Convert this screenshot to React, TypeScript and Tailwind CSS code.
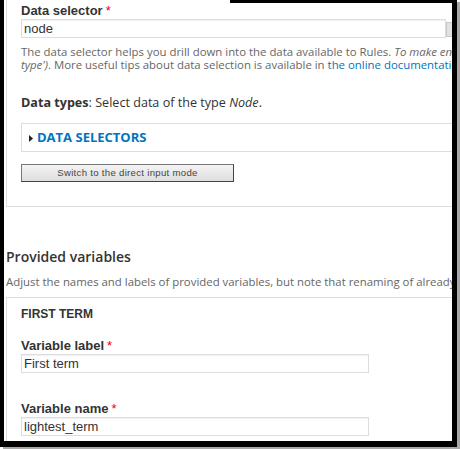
const sans = "font-['Open_Sans',sans-serif]";
const label = "font-['Liberation_Sans',Arial,sans-serif] font-bold text-[13px] text-[#333]";
const field =
  "h-[19px] border border-[#ddd] shadow-[inset_0_1px_1px_rgba(0,0,0,0.06)] bg-white px-[2px] font-['Liberation_Sans',Arial,sans-serif] text-[13px] leading-[17px] text-[#333]";

function Required() {
  return <span className="text-[#e00] ml-[3px] font-normal">*</span>;
}

export default function App() {
  return (
    <div className="relative w-[460px] h-[449px] bg-white overflow-hidden">
      <div className="w-[457px] h-[447px] border-l-[4px] border-r-[5px] border-b-[6px] border-black shadow-[3px_2px_0_#a8a8a8] overflow-hidden">
        <div className="w-[700px]">
          {/* rule settings box, its top is cut off */}
          <div className="ml-[2px] border border-t-0 border-[#ddd] pl-[14px] pt-[3px] pb-[24px]">
            <div className={`${label} leading-[16px]`}>
              Data selector
              <Required />
            </div>
            <div className="flex">
              <div className={`${field} w-[425px] h-[18px] border-[#ccc]`}>node</div>
              <div className="w-[20px] h-[15px] mt-[3px] bg-[#e2e2e2] border border-[#c8c8c8]" />
            </div>
            <div className={`${sans} text-[11.4px] leading-[13px] text-[#666] mt-[7px] whitespace-nowrap`}>
              <div>
                The data selector helps you drill down into the data available to Rules.{' '}
                <em>To make entity fields appear in the data selector, you may have to use the condition</em>
              </div>
              <div>
                <em>type')</em>. More useful tips about data selection is available in{' '}
                <span className="text-[#0074bd]">the online documentation</span>.
              </div>
            </div>
            <div className={`${sans} text-[12.6px] leading-[16px] text-[#333] mt-[24px]`}>
              <span className="font-bold">Data types</span>: Select data of the type <em>Node</em>.
            </div>
            <div className="mt-[12px] h-[29px] border border-[#ddd] flex items-center pl-[7px] gap-[4px]">
              <svg width="4" height="7" viewBox="0 0 4 7" className="mt-[1px]">
                <path d="M0 0 L4 3.5 L0 7 Z" fill="#222" />
              </svg>
              <span className={`${sans} font-bold text-[13px] text-[#0074bd]`}>DATA SELECTORS</span>
            </div>
            <button className="mt-[12px] w-[213px] h-[18px] border border-[#777] border-r-[#444] border-b-[#444] bg-gradient-to-b from-[#f4f4f4] to-[#dedede] font-['Liberation_Sans',Arial,sans-serif] text-[9.6px] leading-[16px] text-[#444] tracking-[0.3px]">
              Switch to the direct input mode
            </button>
          </div>

          <h2 className={`${sans} font-semibold text-[14px] leading-[20px] text-[#333] ml-[2px] mt-[40px]`}>
            Provided variables
          </h2>
          <p className={`${sans} text-[11.4px] leading-[14px] text-[#666] ml-[2px] mt-[8px] whitespace-nowrap`}>
            Adjust the names and labels of provided variables, but note that renaming of already utilized variables invalidates the existing uses.
          </p>

          <div className="ml-[2px] mt-[8px] border border-[#ddd] pl-[14px] pt-[9px] pb-[20px]">
            <div className="font-['Liberation_Sans',Arial,sans-serif] font-bold text-[12px] leading-[14px] text-[#333]">FIRST TERM</div>
            <div className={`${label} leading-[16px] mt-[17px]`}>
              Variable label
              <Required />
            </div>
            <div className={`${field} w-[348px]`}>First term</div>
            <div className={`${label} leading-[16px] mt-[28px]`}>
              Variable name
              <Required />
            </div>
            <div className={`${field} w-[348px]`}>lightest_term</div>
          </div>
        </div>
      </div>
      <div className="absolute top-0 left-[230px] w-[222px] h-[3px] bg-black" />
    </div>
  );
}
